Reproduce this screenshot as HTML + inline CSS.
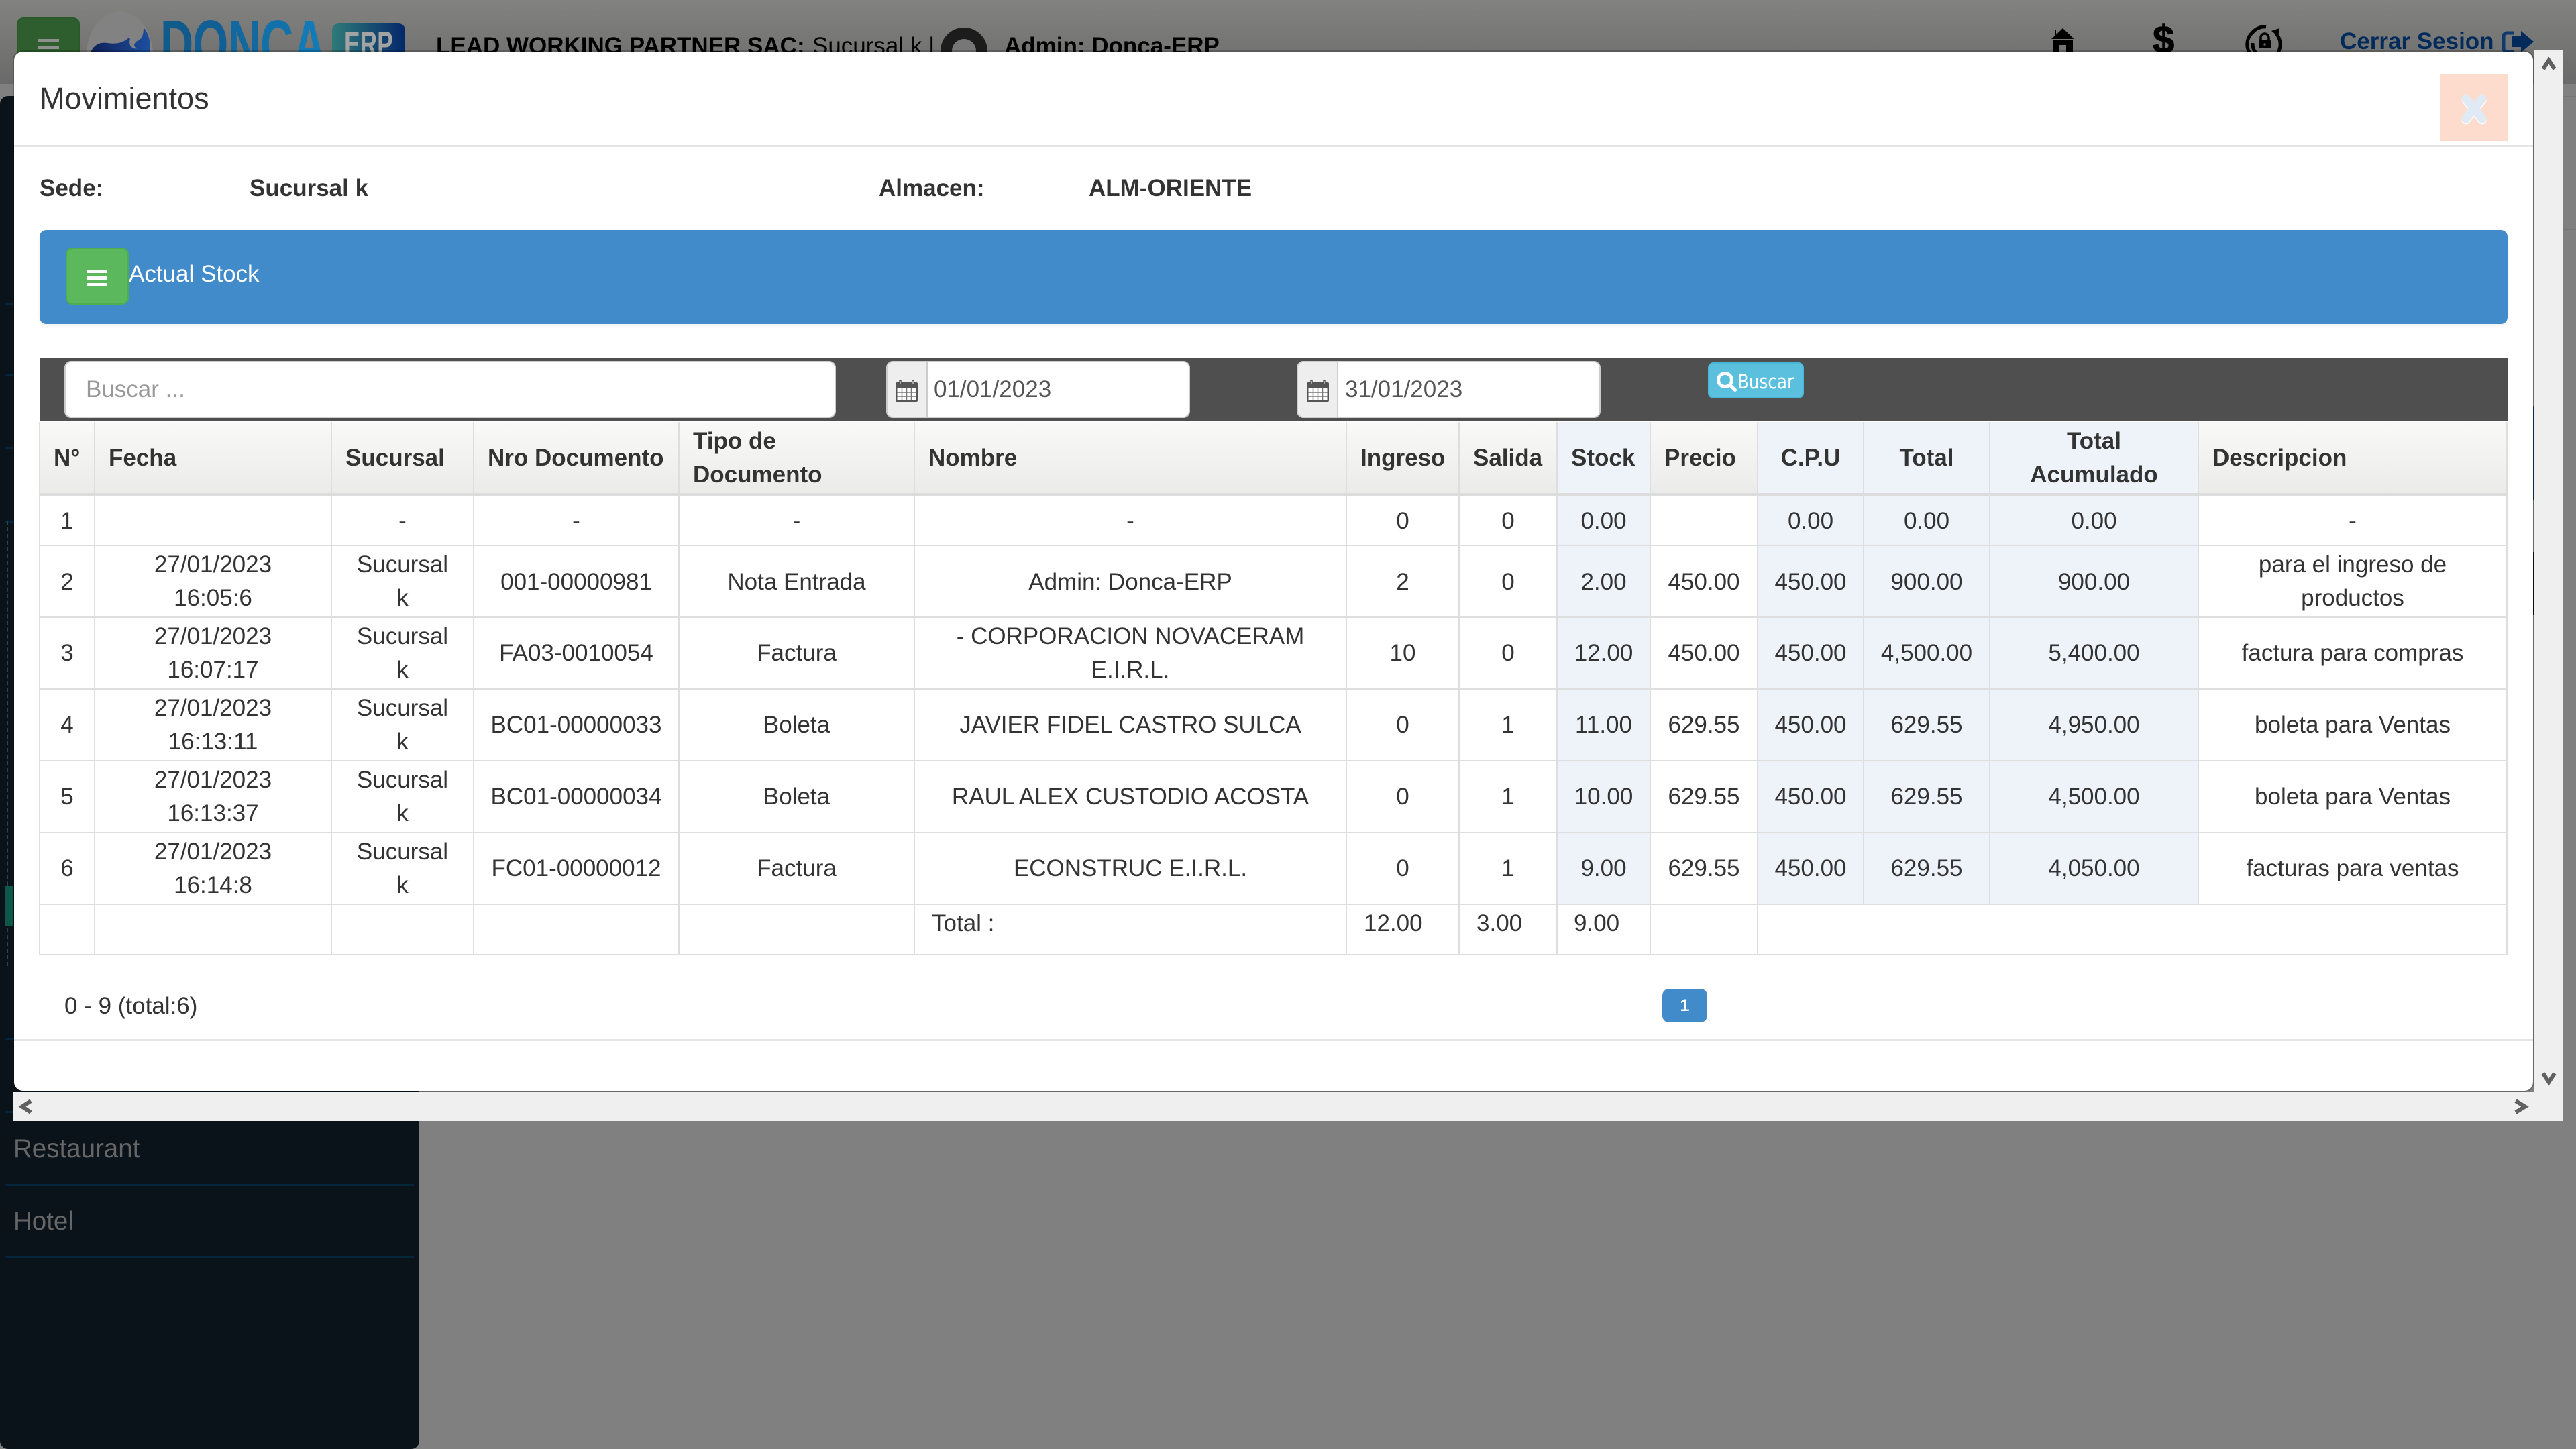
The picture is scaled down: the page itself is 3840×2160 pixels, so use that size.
<!DOCTYPE html>
<html lang="es">
<head>
<meta charset="utf-8">
<title>Movimientos</title>
<style>
html,body{margin:0;padding:0;width:3840px;height:2160px;overflow:hidden;background:#808080}
*{box-sizing:border-box}
#root{position:relative;width:3840px;height:2160px;overflow:hidden;background:#808080;font-family:"Liberation Sans",sans-serif;font-size:35px;line-height:50px;color:#333}
.a{position:absolute}
.t{position:absolute;white-space:nowrap;line-height:50px}
b{font-weight:700}
#hdr{left:0;top:0;width:3840px;height:125px;background:linear-gradient(#828280,#6a6a6a)}
#side{left:0;top:143px;width:625px;height:2017px;background:#0a131a;border-radius:12px}
.sl{position:absolute;left:7px;width:610px;height:2.5px;background:#04263a}
#modal{left:19px;top:75px;width:3759px;height:1553px;border:2px solid rgba(0,0,0,.2);background:#fff;background-clip:padding-box;border-radius:15px}
table{position:absolute;left:58px;top:629px;border-collapse:separate;border-spacing:0;table-layout:fixed;width:3680px;font-size:35px;line-height:50px;color:#333}
th,td{padding:0;border-left:2px solid #dedede;border-bottom:2px solid #dedede;text-align:center;vertical-align:middle;white-space:nowrap;font-weight:400}
th{font-weight:700;background:linear-gradient(#f9f9f7,#ebebe9);border-bottom:5px solid #dcdcdc;text-align:left;padding-left:20px;padding-top:2px}
th.c{text-align:center;padding-left:0}
th.b{background:#eef3fa}
td.b{background:#eef3fa}
td:last-child,th:last-child{border-right:2px solid #dedede}
tr.r1 td{padding-top:2px}
td.s{padding-top:2px}
tr.f td{vertical-align:top;text-align:left;padding-top:3px}
.inp{position:absolute;top:538px;height:85px;background:#fff;border:2.5px solid #ccc;border-radius:10px;overflow:hidden}
.add{position:absolute;left:0;top:0;width:60px;height:100%;background:#eee;border-right:2px solid #ccc}
</style>
</head>
<body>
<div id="root">
<svg width="0" height="0" style="position:absolute"><defs>
<symbol id="cal" viewBox="0 0 33 35">
<rect x="0" y="6" width="33" height="29" rx="2" fill="#555"/>
<rect x="2.5" y="15" width="28" height="18" fill="#fff"/>
<path d="M9.5 15v18M16.5 15v18M23.5 15v18M2.5 21h28M2.5 27h28" stroke="#777" stroke-width="1.5" fill="none"/>
<path d="M7 9V2.5M26 9V2.5" stroke="#555" stroke-width="3.5" fill="none"/>
<path d="M7 9V4M26 9V4" stroke="#fff" stroke-width="1" fill="none"/>
</symbol>
</defs></svg>

<!-- dimmed page behind -->
<div class="a" id="hdr"></div>
<div class="a" style="left:25px;top:26px;width:94px;height:80px;background:#2e5e2e;border:2px solid #2a5a2a;border-radius:10px"></div>
<div class="a" style="left:57px;top:58px;width:31px;height:5px;background:#8f8f8f"></div>
<div class="a" style="left:57px;top:68px;width:31px;height:5px;background:#8f8f8f"></div>
<div class="a" style="left:129px;top:17px;width:99px;height:130px;border-radius:50%;background:#828282"></div>
<svg class="a" style="left:0;top:0" width="240" height="90"><defs><linearGradient id="wh" x1="0" x2="1"><stop offset="0" stop-color="#0f1f55"/><stop offset="1" stop-color="#1c4f9f"/></linearGradient></defs>
<path fill="url(#wh)" d="M134 82C137 68 148 62 160 64C172 66 184 64 192 56L194 58C191 66 196 74 205 72C197 70 200 62 207 60C213 56 214 48 214 41C222 50 226 65 223 82Z"/></svg>
<div class="t" style="left:239px;top:9px;font-size:100px;line-height:115px;font-weight:700;transform:scaleX(.68);transform-origin:0 0;letter-spacing:-1px"><span style="color:#115a8c">D</span><span style="color:#125f95">O</span><span style="color:#13689f">N</span><span style="color:#1371aa">C</span><span style="color:#127ab6">A</span></div>
<div class="a" style="left:495px;top:35px;width:109px;height:70px;border-radius:10px;background:linear-gradient(90deg,#2f7a78,#04286a)"></div>
<div class="t" style="left:513px;top:36px;font-size:52px;line-height:60px;font-weight:700;color:#a3a3a3;transform:scaleX(.68);transform-origin:0 0">ERP</div>
<div class="t" style="left:650px;top:44px;color:#000"><b>LEAD WORKING PARTNER SAC:</b></div>
<div class="t" style="left:1211px;top:44px;color:#000">Sucursal k |</div>
<div class="a" style="left:1402px;top:41px;width:70px;height:70px;border-radius:50%;border:17px solid #1c1c1c;background:#777"></div>
<div class="t" style="left:1497px;top:44px;color:#000"><b>Admin: Donca-ERP</b></div>
<svg class="a" style="left:3040px;top:30px" width="400" height="60" viewBox="3040 30 400 60">
<path d="M3063 44h2v8h-2z" fill="#000"/><path d="M3075 42L3092 58H3058Z" fill="#000"/><path d="M3060 60h30v20h-10v-13h-10v13h-10z" fill="#000"/>
<path d="M3358 64A21 21 0 0 0 3364 80" stroke="#000" stroke-width="5" fill="none"/>
<path d="M3378 40A23 23 0 0 0 3358 48A24 24 0 0 0 3353 78" stroke="#000" stroke-width="5" fill="none"/>
<path d="M3393 50A24 24 0 0 1 3396 78" stroke="#000" stroke-width="5" fill="none"/>
<path d="M3386 46L3398 42L3396 54Z" fill="#000"/>
<path d="M3370 60v-4a6 6 0 0 1 12 0v4" stroke="#000" stroke-width="3.5" fill="none"/><rect x="3367" y="60" width="18" height="12" rx="1" fill="#000"/><circle cx="3376" cy="66" r="1.6" fill="#777"/>
</svg>
<div class="t" style="left:3209px;top:27px;font-size:58px;line-height:66px;font-weight:700;color:#000;-webkit-text-stroke:1px #000">$</div>
<div class="t" style="left:3488px;top:37px;color:#022b5c"><b>Cerrar Sesion</b></div>
<svg class="a" style="left:3725px;top:40px" width="60" height="45" viewBox="3725 40 60 45">
<path d="M3747 49h-10a5 5 0 0 0-5 5v18a5 5 0 0 0 5 5h10" stroke="#0f3a6e" stroke-width="5" fill="none"/>
<path d="M3745 54h13v-8l19 16l-19 16v-8h-13z" fill="#022b5c"/></svg>
<div class="a" style="left:3790px;top:143px;width:70px;height:200px;border:2px solid #777;border-radius:12px"></div>

<div class="a" id="side">
<div class="sl" style="top:308px"></div><div class="sl" style="top:415px"></div><div class="sl" style="top:524px"></div><div class="sl" style="top:633px"></div>
<div class="sl" style="top:1405px"></div><div class="sl" style="top:1513px"></div><div class="sl" style="top:1622px"></div><div class="sl" style="top:1730px"></div>
<div class="a" style="left:8px;top:1177px;width:12px;height:61px;background:#0a5a4a"></div>
<div class="a" style="left:10px;top:633px;height:664px;border-left:2px dashed #33414a"></div>
<div class="t" style="left:20px;top:1545px;color:#666;font-size:38.5px">Restaurant</div>
<div class="t" style="left:20px;top:1653px;color:#666;font-size:38.5px">Hotel</div>
</div>

<!-- scrollbars -->
<div class="a" style="left:3778px;top:75px;width:43px;height:1596px;background:#efefef"></div>
<div class="a" style="left:19px;top:1628px;width:3802px;height:43px;background:#efefef"></div>
<svg class="a" style="left:0;top:0" width="3840" height="1700" viewBox="0 0 3840 1700">
<path d="M3791 103L3799.5 90L3808 103" fill="none" stroke="#606060" stroke-width="6"/>
<path d="M3791 1600L3799.5 1613L3808 1600" fill="none" stroke="#606060" stroke-width="6"/>
<path d="M46 1641L33 1649.5L46 1658" fill="none" stroke="#606060" stroke-width="6"/>
<path d="M3750 1641L3764 1649.5L3750 1658" fill="none" stroke="#606060" stroke-width="6"/>
</svg>

<!-- modal -->
<div class="a" id="modal"></div>
<div class="a" style="left:3776px;top:605px;width:2px;height:140px;background:#0c2a45"></div>
<div class="a" style="left:3776px;top:823px;width:2px;height:94px;background:#0a0a0a"></div>
<div class="t" style="left:59px;top:121px;font-size:45px;line-height:52px">Movimientos</div>
<div class="a" style="left:3638px;top:110px;width:100px;height:100px;background:#fddccd"></div>
<svg class="a" style="left:3660px;top:135px" width="56" height="56" viewBox="0 0 56 56">
<path d="M16 14L40 44M40 14L16 44" stroke="#fff" stroke-width="13" fill="none" stroke-linecap="round"/>
<path d="M16 12L40 42M40 12L16 42" stroke="#dfeaf5" stroke-width="13" fill="none" stroke-linecap="round"/></svg>
<div class="a" style="left:21px;top:216px;width:3755px;height:2.5px;background:#e5e5e5"></div>

<div class="t" style="left:59px;top:256px"><b>Sede:</b></div>
<div class="t" style="left:372px;top:256px"><b>Sucursal k</b></div>
<div class="t" style="left:1310px;top:256px"><b>Almacen:</b></div>
<div class="t" style="left:1623px;top:256px"><b>ALM-ORIENTE</b></div>

<div class="a" style="left:59px;top:343px;width:3679px;height:140px;background:#428bca;border-radius:10px;box-shadow:0 3px 6px rgba(0,0,0,.06)"></div>
<div class="a" style="left:98px;top:369px;width:94px;height:85px;background:#5cb85c;border:2.5px solid #4cae4c;border-radius:10px"></div>
<div class="a" style="left:130px;top:402px;width:30px;height:5px;background:#fff"></div>
<div class="a" style="left:130px;top:412px;width:30px;height:5px;background:#fff"></div>
<div class="a" style="left:130px;top:422px;width:30px;height:5px;background:#fff"></div>
<div class="t" style="left:192px;top:384px;color:#fff">Actual Stock</div>

<div class="a" style="left:59px;top:533px;width:3679px;height:95px;background:#4f4f4f"></div>
<div class="inp" style="left:96px;width:1150px"></div>
<div class="t" style="left:128px;top:556px;color:#999">Buscar ...</div>
<div class="inp" style="left:1321px;width:453px"><div class="add"></div></div>
<svg class="a" style="left:1335px;top:564px" width="33" height="35"><use href="#cal"/></svg>
<div class="t" style="left:1392px;top:556px;color:#555">01/01/2023</div>
<div class="inp" style="left:1933px;width:453px"><div class="add"></div></div>
<svg class="a" style="left:1948px;top:564px" width="33" height="35"><use href="#cal"/></svg>
<div class="t" style="left:2005px;top:556px;color:#555">31/01/2023</div>
<div class="a" style="left:2546px;top:540px;width:143px;height:54px;background:#5bc0de;border:2.5px solid #46b8da;border-radius:8px"></div>
<svg class="a" style="left:2555px;top:552px" width="36" height="36" viewBox="0 0 36 36"><circle cx="16.5" cy="14.5" r="10" fill="none" stroke="#fff" stroke-width="5"/><path d="M24 22L31.5 29.5" stroke="#fff" stroke-width="5" stroke-linecap="round"/></svg>
<div class="t" style="left:2590px;top:544px;font-family:'DejaVu Sans',sans-serif;font-size:29px;color:#fff;transform:scaleX(.85);transform-origin:0 0">Buscar</div>

<table>
<colgroup><col style="width:82px"><col style="width:353px"><col style="width:212px"><col style="width:306px"><col style="width:351px"><col style="width:644px"><col style="width:168px"><col style="width:146px"><col style="width:139px"><col style="width:160px"><col style="width:158px"><col style="width:188px"><col style="width:311px"><col style="width:462px"></colgroup>
<tr style="height:111px"><th>N°</th><th>Fecha</th><th>Sucursal</th><th>Nro Documento</th><th>Tipo de<br>Documento</th><th>Nombre</th><th>Ingreso</th><th>Salida</th><th class="b">Stock</th><th>Precio</th><th class="c b">C.P.U</th><th class="c b">Total</th><th class="c b">Total<br>Acumulado</th><th>Descripcion</th></tr>
<tr class="r1" style="height:74px"><td>1</td><td></td><td>-</td><td>-</td><td>-</td><td>-</td><td>0</td><td>0</td><td class="b">0.00</td><td></td><td class="b">0.00</td><td class="b">0.00</td><td class="b">0.00</td><td>-</td></tr>
<tr style="height:107px"><td class="s">2</td><td>27/01/2023<br>16:05:6</td><td>Sucursal<br>k</td><td class="s">001-00000981</td><td class="s">Nota Entrada</td><td class="s">Admin: Donca-ERP</td><td class="s">2</td><td class="s">0</td><td class="b s">2.00</td><td class="s">450.00</td><td class="b s">450.00</td><td class="b s">900.00</td><td class="b s">900.00</td><td>para el ingreso de<br>productos</td></tr>
<tr style="height:107px"><td>3</td><td>27/01/2023<br>16:07:17</td><td>Sucursal<br>k</td><td>FA03-0010054</td><td>Factura</td><td>- CORPORACION NOVACERAM<br>E.I.R.L.</td><td>10</td><td>0</td><td class="b">12.00</td><td>450.00</td><td class="b">450.00</td><td class="b">4,500.00</td><td class="b">5,400.00</td><td>factura para compras</td></tr>
<tr style="height:107px"><td>4</td><td>27/01/2023<br>16:13:11</td><td>Sucursal<br>k</td><td>BC01-00000033</td><td>Boleta</td><td>JAVIER FIDEL CASTRO SULCA</td><td>0</td><td>1</td><td class="b">11.00</td><td>629.55</td><td class="b">450.00</td><td class="b">629.55</td><td class="b">4,950.00</td><td>boleta para Ventas</td></tr>
<tr style="height:107px"><td>5</td><td>27/01/2023<br>16:13:37</td><td>Sucursal<br>k</td><td>BC01-00000034</td><td>Boleta</td><td>RAUL ALEX CUSTODIO ACOSTA</td><td>0</td><td>1</td><td class="b">10.00</td><td>629.55</td><td class="b">450.00</td><td class="b">629.55</td><td class="b">4,500.00</td><td>boleta para Ventas</td></tr>
<tr style="height:107px"><td>6</td><td>27/01/2023<br>16:14:8</td><td>Sucursal<br>k</td><td>FC01-00000012</td><td>Factura</td><td>ECONSTRUC E.I.R.L.</td><td>0</td><td>1</td><td class="b">9.00</td><td>629.55</td><td class="b">450.00</td><td class="b">629.55</td><td class="b">4,050.00</td><td>facturas para ventas</td></tr>
<tr class="f" style="height:75px"><td></td><td></td><td></td><td></td><td></td><td style="padding-left:25px">Total :</td><td style="padding-left:25px">12.00</td><td style="padding-left:25px">3.00</td><td style="padding-left:24px">9.00</td><td></td><td colspan="4"></td></tr>
</table>

<div class="t" style="left:96px;top:1475px">0 - 9 (total:6)</div>
<div class="a" style="left:2478px;top:1474px;width:67px;height:50px;background:#428bca;border-radius:10px;color:#fff;font-size:25px;font-weight:700;line-height:50px;text-align:center">1</div>
<div class="a" style="left:21px;top:1549px;width:3755px;height:2.5px;background:#e5e5e5"></div>
</div>
</body>
</html>
